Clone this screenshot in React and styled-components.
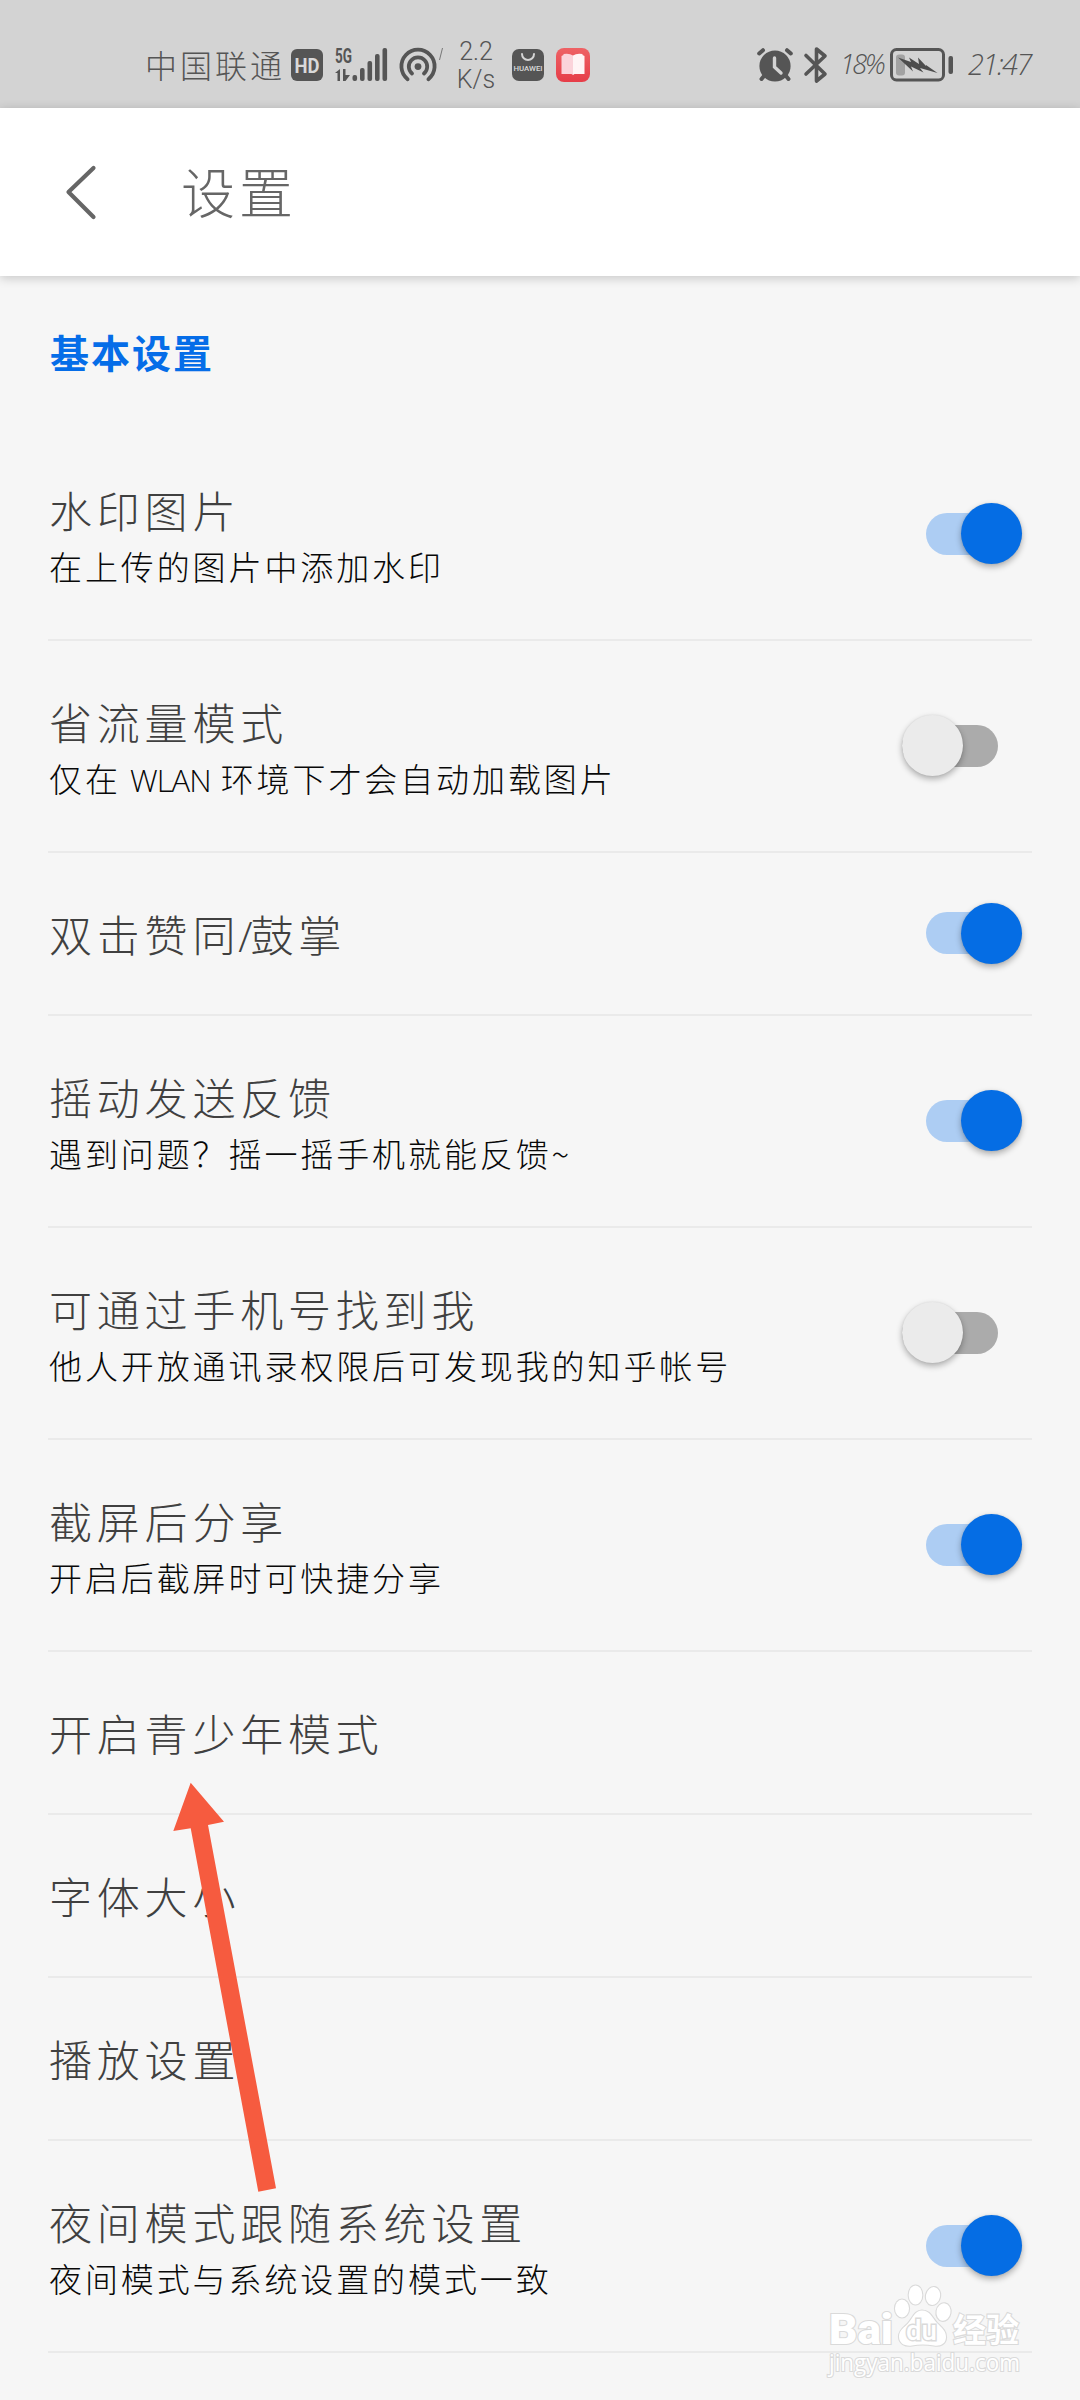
import React from "react";
import styled, { createGlobalStyle } from "styled-components";

const GlobalStyle = createGlobalStyle`
  * { box-sizing: border-box; }
  html, body { margin: 0; padding: 0; }
  body {
    width: 1080px;
    background: #f6f6f6;
    font-family: "Noto Sans CJK SC", "Noto Sans", sans-serif;
    font-weight: 300;
  }
`;

const Screen = styled.div`
  position: relative;
  width: 1080px;
  height: 2400px;
  overflow: hidden;
  background: #f6f6f6;
  display: flex;
  flex-direction: column;
`;

const StatusBar = styled.header`
  height: 108px;
  flex: none;
  padding: 22px 46px 0 145px;
  background: #d3d3d3;
  color: #555;
  display: flex;
  justify-content: space-between;
`;

const StatusGroup = styled.div`
  height: 86px;
  display: flex;
  align-items: center;
  svg { display: block; flex: none; overflow: visible; }
`;

const StatusText = styled.span`
  font-size: ${(p) => p.$size}px;
  width: ${(p) => p.$width}px;
  margin-left: ${(p) => p.$gap || 0}px;
  margin-bottom: 2px;
  letter-spacing: ${(p) => p.$spacing || 0}px;
  line-height: 40px;
  white-space: nowrap;
  font-family: ${(p) => (p.$latin ? '"Open Sans", sans-serif' : "inherit")};
  font-style: ${(p) => (p.$latin ? "italic" : "normal")};
`;

const Slot = styled.div`
  margin-left: ${(p) => p.$gap}px;
  flex: none;
`;

const Speed = styled.div`
  width: 40px;
  margin-left: 13px;
  margin-top: 2px;
  font-family: Roboto, sans-serif;
  font-weight: 300;
  font-size: 25px;
  line-height: 28px;
  text-align: center;
`;

const TitleBar = styled.div`
  height: 168px;
  flex: none;
  padding-left: 64px;
  background: #fff;
  color: #666;
  box-shadow: 0 2px 10px rgba(0, 0, 0, 0.2);
  display: flex;
  align-items: center;
  svg { display: block; }
`;

const PageTitle = styled.h1`
  margin: 0 0 3px 83px;
  font-size: 54px;
  line-height: 70px;
  letter-spacing: 4px;
  font-weight: 300;
`;

const SectionTitle = styled.h2`
  height: 153px;
  flex: none;
  margin: 0;
  padding: 48px 0 0 50px;
  font-size: 39px;
  line-height: 54px;
  letter-spacing: 2px;
  font-weight: 700;
  color: #056de8;
`;

const List = styled.div`
  margin: 0 48px;
`;

const Row = styled.div`
  height: ${(p) => (p.$tall ? 212 : 163)}px;
  border-bottom: 2px solid #eaeaea;
  display: flex;
  align-items: center;
  justify-content: space-between;
`;

const RowText = styled.div`
  align-self: flex-start;
  padding-top: 49px;
`;

const RowTitle = styled.div`
  height: 62px;
  line-height: 62px;
  font-size: 43px;
  letter-spacing: 4.8px;
  padding-left: 1px;
  color: #404040;
  white-space: nowrap;
`;

const RowNote = styled.div`
  height: 52px;
  line-height: 53px;
  font-size: 33px;
  letter-spacing: 2.9px;
  padding-left: 1px;
  color: #080808;
  white-space: nowrap;
`;

const Narrow = styled.span`
  font-family: "Open Sans", "Noto Sans", sans-serif;
  font-size: ${(p) => p.$size}px;
  letter-spacing: ${(p) => p.$spacing || 0}px;
  margin-left: ${(p) => p.$before || 0}px;
`;

const Track = styled.div`
  width: 96px;
  height: 42px;
  flex: none;
  margin: 0 ${(p) => (p.$on ? 10 : 34)}px 1px 0;
  border-radius: 21px;
  background: ${(p) => (p.$on ? "#adcdf3" : "#ababab")};
  display: flex;
  align-items: center;
  justify-content: ${(p) => (p.$on ? "flex-end" : "flex-start")};
`;

const Thumb = styled.div`
  width: 61px;
  height: 61px;
  flex: none;
  border-radius: 50%;
  background: ${(p) => (p.$on ? "#056de4" : "#ebebeb")};
  box-shadow: 0 3px 6px rgba(0, 0, 0, 0.3), 0 0 2px rgba(0, 0, 0, 0.08);
`;

const Arrow = styled.svg`
  position: absolute;
  left: 170px;
  top: 1780px;
`;

const Watermark = styled.div`
  position: absolute;
  left: 827px;
  top: 2282px;
  width: 200px;
  height: 98px;
  svg { display: block; overflow: visible; }
`;

function Switch({ on }) {
  return (
    <Track $on={on}>
      <Thumb $on={on} />
    </Track>
  );
}

const rows = [
  { title: "水印图片", note: "在上传的图片中添加水印", on: true },
  {
    title: "省流量模式",
    note: (
      <>
        仅在 <Narrow $size={31} $spacing={-1} $before={-1}>WLAN</Narrow> 环境下才会自动加载图片
      </>
    ),
    on: false,
  },
  { title: <>双击赞同<Narrow $size={42} $spacing={-2} $before={-2}>/</Narrow>鼓掌</>, on: true },
  { title: "摇动发送反馈", note: "遇到问题？摇一摇手机就能反馈~", on: true },
  { title: "可通过手机号找到我", note: "他人开放通讯录权限后可发现我的知乎帐号", on: false },
  { title: "截屏后分享", note: "开启后截屏时可快捷分享", on: true },
  { title: "开启青少年模式" },
  { title: "字体大小" },
  { title: "播放设置" },
  { title: "夜间模式跟随系统设置", note: "夜间模式与系统设置的模式一致", on: true },
];

const HdIcon = () => (
  <svg width="32" height="32" viewBox="0 0 32 32">
    <rect width="32" height="32" rx="6" fill="#555" />
    <text x="16" y="23.5" fontSize="20" fontWeight="700" fontFamily="Roboto, sans-serif" textAnchor="middle" textLength="25" lengthAdjust="spacingAndGlyphs" fill="#d9d9d9">HD</text>
  </svg>
);

const SignalIcon = () => (
  <svg width="53" height="34" viewBox="0 0 53 34" fill="#555">
    <text x="0" y="15" fontSize="20" fontWeight="700" fontFamily="Roboto, sans-serif" textLength="17" lengthAdjust="spacingAndGlyphs">5G</text>
    <path d="M0 25l5-4v12H2.500v-8zM8 21h2.500v6h4.500l-4.500 6H8z" />
    <rect x="17.5" y="27" width="4.6" height="6" rx="2" />
    <rect x="25" y="20" width="4.6" height="13" rx="2" />
    <rect x="32.5" y="13" width="4.6" height="20" rx="2" />
    <rect x="40" y="6" width="4.6" height="27" rx="2" />
    <rect x="47.5" y="0" width="4.6" height="33" rx="2" />
  </svg>
);

const HotspotIcon = () => (
  <svg width="38" height="34" viewBox="0 0 38 34" fill="none" stroke="#555" strokeWidth="3.8" strokeLinecap="round">
    <path d="M8.6 31.2A16.6 16.6 0 1 1 29.4 31.2" />
    <path d="M13 25.5A9.2 9.2 0 1 1 25 25.5" />
    <circle cx="19" cy="18.6" r="3.4" fill="#555" stroke="none" />
  </svg>
);

const StoreIcon = () => (
  <svg width="32" height="32" viewBox="0 0 32 32">
    <rect width="32" height="32" rx="7" fill="#555" />
    <path d="M10 5a6 6 0 0 0 12 0" fill="none" stroke="#d5d5d5" strokeWidth="2" strokeLinecap="round" />
    <text x="16" y="21.5" fontSize="7.5" fontWeight="500" fontFamily="Roboto, sans-serif" textAnchor="middle" textLength="29" lengthAdjust="spacingAndGlyphs" fill="#dadada">HUAWEI</text>
  </svg>
);

const BookIcon = () => (
  <svg width="34" height="34" viewBox="0 0 34 34">
    <defs>
      <linearGradient id="book" x1="0" y1="0" x2="0" y2="1">
        <stop offset="0" stopColor="#ee6265" />
        <stop offset="1" stopColor="#e63d48" />
      </linearGradient>
    </defs>
    <rect width="34" height="34" rx="8" fill="url(#book)" />
    <path d="M5.5 8l2-1 0-1q6-1 9.500 1.500V27l-1.500-1H5.500z" fill="#fbd3da" />
    <path d="M28.500 8l-2-1V6q-6-1-9.500 1.500V27l1.500-1H28.500z" fill="#fff4f5" />
  </svg>
);

const AlarmIcon = () => (
  <svg width="36" height="34" viewBox="0 0 36 34">
    <g stroke="#555" strokeWidth="4" strokeLinecap="round">
      <path d="M2.200 5.500L6 2.200M33.800 5.500L30 2.200M7 28L4.500 31M29 28l2.500 3" />
    </g>
    <circle cx="18" cy="18" r="15.600" fill="#555" />
    <path d="M17.500 10v9l6.500 6" fill="none" stroke="#d3d3d3" strokeWidth="3.400" strokeLinecap="round" />
  </svg>
);

const BluetoothIcon = () => (
  <svg width="24" height="36" viewBox="0 0 24 36">
    <path d="M2 8.500L21 27 12.500 34V2L21 9 2 27" fill="none" stroke="#555" strokeWidth="3.600" strokeLinecap="round" strokeLinejoin="round" />
  </svg>
);

const BatteryIcon = () => (
  <svg width="64" height="34" viewBox="0 0 64 34">
    <rect x="1.500" y="1.500" width="52" height="30.500" rx="5" fill="none" stroke="#555" strokeWidth="3" />
    <rect x="6" y="6.500" width="9" height="21" rx="3" fill="#a2a2a2" />
    <path d="M8 9.500l13 4.500-2-4.500 10 6.500-1-6.500L36 18l0-1 11.500 8L30 20l3.500 4.500L21 18.500l2 5z" fill="#4d4d4d" />
    <rect x="58.500" y="8" width="4.500" height="18" rx="2" fill="#555" />
  </svg>
);

const outline = { fill: "#fff", stroke: "#dadada", strokeWidth: 2.2, paintOrder: "stroke" };

export default function App() {
  return (
    <>
      <GlobalStyle />
      <Screen>
        <StatusBar>
          <StatusGroup>
            <StatusText $size={32} $width={146} $spacing={3}>中国联通</StatusText>
            <Slot $gap={0}><HdIcon /></Slot>
            <Slot $gap={12}><SignalIcon /></Slot>
            <Slot $gap={11}><HotspotIcon /></Slot>
            <Slot $gap={2}>
              <svg width="4" height="36" viewBox="0 0 4 36"><path d="M3.500 1L.5 13" stroke="#777" /></svg>
            </Slot>
            <Speed>2.2<br />K/s</Speed>
            <Slot $gap={16}><StoreIcon /></Slot>
            <Slot $gap={12}><BookIcon /></Slot>
          </StatusGroup>
          <StatusGroup>
            <Slot $gap={0}><AlarmIcon /></Slot>
            <Slot $gap={11}><BluetoothIcon /></Slot>
            <StatusText $latin $size={27} $width={50} $gap={12} $spacing={-2.5}>18%</StatusText>
            <Slot $gap={0}><BatteryIcon /></Slot>
            <StatusText $latin $size={29} $width={66} $gap={14} $spacing={-1.5}>21:47</StatusText>
          </StatusGroup>
        </StatusBar>
        <TitleBar>
          <svg width="34" height="56" viewBox="0 0 34 56">
            <path d="M29.500 4L4.500 28l25 25" fill="none" stroke="#666" strokeWidth="4.200" strokeLinecap="round" strokeLinejoin="round" />
          </svg>
          <PageTitle>设置</PageTitle>
        </TitleBar>
        <SectionTitle>基本设置</SectionTitle>
        <List>
          {rows.map((row, i) => (
            <Row key={i} $tall={Boolean(row.note)}>
              <RowText>
                <RowTitle>{row.title}</RowTitle>
                {row.note && <RowNote>{row.note}</RowNote>}
              </RowText>
              {row.on !== undefined && <Switch on={row.on} />}
            </Row>
          ))}
        </List>
        <Arrow width="110" height="415" viewBox="170 1780 110 415">
          <path d="M190.700 1782.700L173.300 1831l17.400-2.700L258.300 2191.700l17.700-3.400L208 1825l16-3.300z" fill="#f65b3f" />
        </Arrow>
        <Watermark>
          <svg width="200" height="98" viewBox="827 2282 200 98">
            <g {...outline} fontFamily="Roboto, sans-serif">
              <text x="829" y="2344" fontSize="42" fontWeight="900" textLength="64" lengthAdjust="spacingAndGlyphs">Bai</text>
              <ellipse cx="902" cy="2308.500" rx="7" ry="9" />
              <ellipse cx="915.500" cy="2295" rx="6.800" ry="9.500" />
              <ellipse cx="933" cy="2296" rx="7" ry="9" transform="rotate(12 933 2296)" />
              <ellipse cx="943.500" cy="2312" rx="7" ry="8.800" transform="rotate(10 943 2312)" />
              <path d="M922 2310.500c8 0 10 7 15 12.500 5 5 9 8 9 14 0 7-6 9.500-12 8.500-8-1.500-15-1.500-22 0-7 1-13-2-13-9 0-6 5-9 9-13 5-6 7-13 14-13z" />
              <text x="906" y="2340" fontSize="28" fontWeight="500" textLength="31" lengthAdjust="spacingAndGlyphs" strokeWidth="3">du</text>
              <text x="953" y="2342" fontSize="33" fontWeight="700" fontFamily="'Noto Sans CJK SC', sans-serif">经验</text>
              <text x="829" y="2371" fontSize="23" fontWeight="500" fontFamily="'Open Sans', sans-serif" textLength="191" lengthAdjust="spacingAndGlyphs">jingyan.baidu.com</text>
            </g>
          </svg>
        </Watermark>
      </Screen>
    </>
  );
}
